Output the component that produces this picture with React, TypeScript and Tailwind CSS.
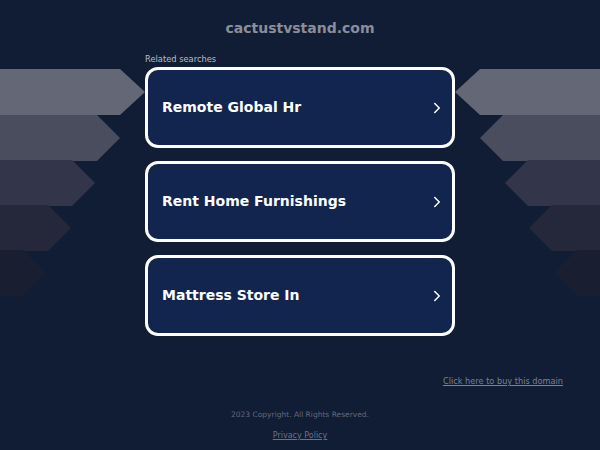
import React from 'react';
import { ChevronRight } from 'lucide-react';

const searches = ['Remote Global Hr', 'Rent Home Furnishings', 'Mattress Store In'];

// decorative stripes on both sides
const stripes = [
  { y: 69, w: 120, tip: 25, fill: '#646876' },
  { y: 115, w: 97, tip: 23, fill: '#4a4d5e' },
  { y: 160, w: 72, tip: 23, fill: '#33364a' },
  { y: 205, w: 48, tip: 23, fill: '#25283a' },
  { y: 250, w: 23, tip: 23, fill: '#1a1e31' },
];

const Backdrop = () => (
  <svg className="absolute inset-0 pointer-events-none" width="600" height="450" viewBox="0 0 600 450">
    {stripes.map((s, i) => {
      const h = 46;
      const tip = s.w + s.tip;
      const left = `0,${s.y} ${s.w},${s.y} ${tip},${s.y + h / 2} ${s.w},${s.y + h} 0,${s.y + h}`;
      const right = `600,${s.y} ${600 - s.w},${s.y} ${600 - tip},${s.y + h / 2} ${600 - s.w},${s.y + h} 600,${s.y + h}`;
      return (
        <g key={i}>
          <polygon points={left} fill={s.fill} />
          <polygon points={right} fill={s.fill} />
        </g>
      );
    })}
  </svg>
);

export default function App() {
  return (
    <div className="relative w-[600px] h-[450px] overflow-hidden bg-[#111c35] font-['DejaVu_Sans',sans-serif]">
      <Backdrop />
      <div className="relative flex flex-col items-center">
        <h1 className="mt-[18px] text-[14px] leading-[20px] font-bold text-[#8a8e99]">cactustvstand.com</h1>

        <div className="w-[310px] mt-[16px]">
          <p className="text-[8.3px] leading-[10px] text-[#b9bcc6]">Related searches</p>
          <div className="flex flex-col gap-[13px] mt-[3px]">
            {searches.map(s => (
              <div
                key={s}
                className="h-[81px] flex items-center justify-between pl-[14px] pr-[6px] rounded-[13px] border-[3px] border-white bg-[#12254e]"
              >
                <span className="text-[14px] font-bold text-white">{s}</span>
                <ChevronRight size={18} strokeWidth={2} className="text-white" />
              </div>
            ))}
          </div>
        </div>

        <div className="w-full flex justify-end pr-[37px] mt-[39px]">
          <a className="text-[8.2px] leading-[12px] text-[#7b808d] underline">Click here to buy this domain</a>
        </div>

        <p className="mt-[23px] text-[7.5px] leading-[10px] text-[#636a7c]">2023 Copyright. All Rights Reserved.</p>
        <a className="mt-[11px] text-[8px] leading-[10px] text-[#6d7282] underline">Privacy Policy</a>
      </div>
    </div>
  );
}
